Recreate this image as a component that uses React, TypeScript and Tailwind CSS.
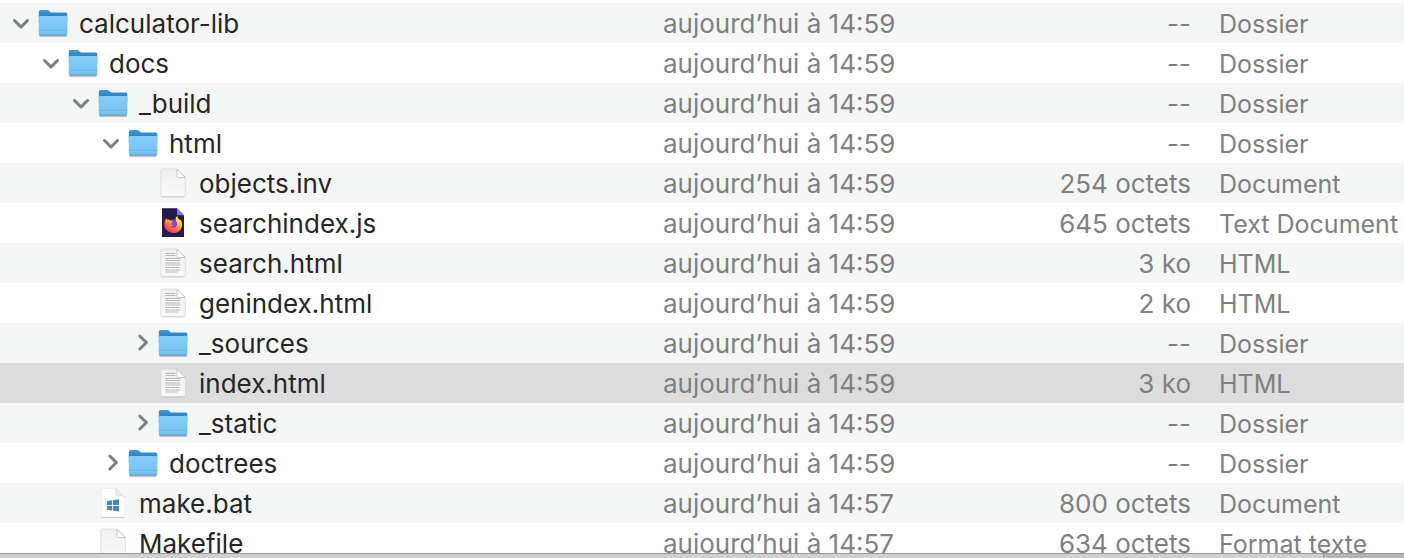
import { useState } from "react";

type IconKind = "folder" | "blank" | "firefox" | "text" | "windows";

interface Entry {
  name: string;
  indent: string;
  level: number;
  icon: IconKind;
  date: string;
  size: string;
  kind: string;
  open?: boolean;
}

const PAD = ["pl-[10px]", "pl-[40px]", "pl-[70px]", "pl-[100px]", "pl-[130px]"];
const T59 = "aujourd’hui à 14:59";
const T57 = "aujourd’hui à 14:57";

function folder(name: string, level: number, open: boolean): Entry {
  return { name, level, indent: PAD[level], icon: "folder", date: T59, size: "--", kind: "Dossier", open };
}

function file(name: string, level: number, icon: IconKind, size: string, kind: string, date = T59): Entry {
  return { name, level, indent: PAD[level], icon, date, size, kind };
}

const ENTRIES: Entry[] = [
  folder("calculator-lib", 0, true),
  folder("docs", 1, true),
  folder("_build", 2, true),
  folder("html", 3, true),
  file("objects.inv", 4, "blank", "254 octets", "Document"),
  file("searchindex.js", 4, "firefox", "645 octets", "Text Document"),
  file("search.html", 4, "text", "3 ko", "HTML"),
  file("genindex.html", 4, "text", "2 ko", "HTML"),
  folder("_sources", 4, false),
  file("index.html", 4, "text", "3 ko", "HTML"),
  folder("_static", 4, false),
  folder("doctrees", 3, false),
  file("make.bat", 2, "windows", "800 octets", "Document", T57),
  file("Makefile", 2, "blank", "634 octets", "Format texte", T57),
];

function Defs() {
  return (
    <svg className="absolute size-0" aria-hidden="true">
      <defs>
        <linearGradient id="folderFront" x1="0" y1="0" x2="0" y2="1">
          <stop offset="0" stopColor="#86cdf8" />
          <stop offset="1" stopColor="#70c0f0" />
        </linearGradient>
        <linearGradient id="folderBack" x1="0" y1="0" x2="0" y2="1">
          <stop offset="0" stopColor="#4997cf" />
          <stop offset="0.5" stopColor="#2f7fbd" />
        </linearGradient>
        <linearGradient id="paper" x1="0" y1="0" x2="0" y2="1">
          <stop offset="0" stopColor="#efefef" />
          <stop offset="1" stopColor="#f9f9f9" />
        </linearGradient>
        <linearGradient id="flame" x1="0.85" y1="0.05" x2="0.2" y2="0.95">
          <stop offset="0" stopColor="#fff04a" />
          <stop offset="0.4" stopColor="#ffb02c" />
          <stop offset="0.75" stopColor="#ff5a45" />
          <stop offset="1" stopColor="#ee2c84" />
        </linearGradient>
      </defs>
    </svg>
  );
}

function FolderIcon() {
  return (
    <svg viewBox="0 0 30 30" className="size-[30px]" aria-hidden="true">
      <path d="M1.500 28h27" stroke="#000" strokeOpacity=".3" strokeWidth="1.600" />
      <path d="M.8 4.200C.8 2.800 1.500 2 2.800 2h6.200c1 0 1.500.3 2.200 1l.8.8c.4.4.9.6 1.600.6h14c1.100 0 1.700.7 1.700 1.800V15H.8z" fill="url(#folderBack)" />
      <path d="M.8 10c0-1.200.6-1.800 1.700-1.800h25.100c1.100 0 1.700.6 1.700 1.800v15.800c0 1.100-.6 1.700-1.700 1.700H2.500c-1.100 0-1.700-.6-1.700-1.700z" fill="url(#folderFront)" />
      <path d="M1.500 8.600h27.500" stroke="#9bd6fa" strokeWidth=".6" />
      <path d="M.8 22.800h28.500" stroke="#5babdc" strokeWidth=".8" />
      <path d="M.8 23.700h28.500" stroke="#92d2f8" strokeWidth=".6" />
      <path d="M1.500 27h27.200" stroke="#4a9bd2" strokeWidth=".9" />
    </svg>
  );
}

function TextLines() {
  const lines = [
    ["M7.500 5.500h10", "3 .3 2 .2"],
    ["M7.500 7.500h10", "2 .2 3 .3"],
    ["M7.500 10.500h14.500", "2.500 .3 1.500 .2"],
    ["M7.500 12.500h15", "1.500 .2 3 .3"],
    ["M7.500 15h14.500", "3 .3 2 .3"],
    ["M7.500 17h15", "2 .3 1.500 .2"],
    ["M7.500 19.500h14", "1.500 .3 3 .2"],
    ["M7.500 22h15", "2.500 .2 2 .3"],
    ["M7.500 24h12", "2 .2 1.500 .3"],
  ];
  return (
    <g stroke="#b4b4b4" strokeWidth="1.200">
      {lines.map(([d, dash]) => (
        <path key={d} d={d} strokeDasharray={dash} />
      ))}
    </g>
  );
}

function PaperIcon({ lined }: { lined: boolean }) {
  return (
    <svg viewBox="0 0 30 30" className="size-[30px]" aria-hidden="true">
      <path d="M3.500 28.700h23" stroke="#000" strokeOpacity=".24" strokeWidth="1.200" />
      <path d="M4.500 1H19l8.300 8.500v17c0 1.300-.7 2-2 2H4.800c-1.300 0-2-.7-2-2v-24C2.800 1.500 3.500 1 4.500 1z" fill="url(#paper)" stroke="#d4d4d4" strokeWidth=".7" />
      {lined && <TextLines />}
      <path d="M19 1.200V8c0 1 .5 1.500 1.500 1.500h6.800z" fill="#fff" stroke="#b8b8b8" strokeWidth=".8" />
    </svg>
  );
}

function FirefoxIcon() {
  return (
    <svg viewBox="0 0 30 30" className="size-[30px]" aria-hidden="true">
      <path d="M4 .2h15l7 7V29H4z" fill="#241a4d" />
      <path d="M19 .2v6c0 .7.300 1 1 1h6z" fill="#8a74d4" />
      <path d="M6.900 12.600c.2-1 .8-2 1.500-2.700.1.900.4 1.400.9 1.800.8-.2 1.500-.1 2.100.2l8-2.900c.3 1.300 1.400 2 2.300 3.200.1-.5 0-.9-.1-1.300 1.900 1.400 2.800 3.800 2.500 6.500-.5 4.300-3.800 7.600-8.500 7.600-5.200 0-9.200-3.500-9.200-8.200 0-1.500 0-3 .5-4.200z" fill="url(#flame)" />
      <path d="M11.400 11.900c1.300-1.800 3-2.600 4.800-2.900l3.200-.2c-.7 1.200-.7 2.400.2 4z" fill="#241a4d" />
      <path d="M19.400 8c-1.500 1-2.200 2.600-1.600 4.200l1.700 3 2.500-2.500c-1-1.500-2.600-2.300-2.600-4.700z" fill="#ffe24a" />
      <path d="M12.300 12.500c1.500-1.400 4.300-1.200 5.800.4 1.700 1.900 1.500 5-.5 6.300-1.700 1.100-4.100.6-5-.9 1.600.3 2.400-.5 2.800-1.200-1.300.2-2.300-.4-2.100-1.300 0-.7.8-1.100 1.600-1.100-.2-1.200-1.500-1.700-2.600-2.200z" fill="#8045e2" />
    </svg>
  );
}

function WindowsIcon() {
  return (
    <svg viewBox="0 0 30 30" className="size-[30px]" aria-hidden="true">
      <path d="M3.500 29.300h23" stroke="#000" strokeOpacity=".3" strokeWidth=".9" />
      <path d="M3.500 .5H17.500l8.800 8.500v20H3.500z" fill="#fff" stroke="#e6e6e6" strokeWidth=".5" />
      <path d="M17.500 .5c1 2.500.8 5 .2 6.800 2.800-.5 6.300.1 8.600 1.700z" fill="#ededed" stroke="#c9c9c9" strokeWidth=".5" />
      <path d="M9 13l5-.7V17H9zM14.800 12.200l6.200-.9V17h-6.200zM9 17.700h5v4.700l-5-.7zM14.800 17.700H21v5.700l-6.200-.9z" fill="#4f87ab" />
    </svg>
  );
}

function EntryIcon({ kind }: { kind: IconKind }) {
  if (kind === "folder") return <FolderIcon />;
  if (kind === "firefox") return <FirefoxIcon />;
  if (kind === "windows") return <WindowsIcon />;
  return <PaperIcon lined={kind === "text"} />;
}

function Chevron({ open }: { open: boolean }) {
  return (
    <svg viewBox="0 0 22 22" className="size-[22px]" fill="none" stroke="#7c7d7d" strokeWidth="3" strokeLinecap="round" strokeLinejoin="round" aria-hidden="true">
      <path d={open ? "M4.500 8.500l6.500 6.500 6.500-6.500" : "M9.800 4l6.700 6.500-6.700 6.500"} />
    </svg>
  );
}

export default function App() {
  const [closed, setClosed] = useState<string[]>(
    ENTRIES.filter((e) => e.open === false).map((e) => e.name),
  );
  const [selected, setSelected] = useState("index.html");

  const visible: Entry[] = [];
  let hiddenBelow = Infinity;
  for (const entry of ENTRIES) {
    if (entry.level > hiddenBelow) continue;
    hiddenBelow = closed.includes(entry.name) ? entry.level : Infinity;
    visible.push(entry);
  }

  const toggle = (name: string) =>
    setClosed((list) => (list.includes(name) ? list.filter((n) => n !== name) : [...list, name]));

  return (
    <div className="flex h-screen flex-col bg-white font-['Inter',sans-serif] text-[26px] leading-[38px]">
      <Defs />
      <main className="min-h-0 flex-1 overflow-hidden pt-[3px]">
        <table className="w-full table-fixed border-collapse whitespace-nowrap">
          <colgroup>
            <col />
            <col className="w-[345px]" />
            <col className="w-[183px]" />
            <col className="w-[213px]" />
          </colgroup>
          <tbody className="text-[#7f8080]">
            {visible.map((entry, i) => {
              const isOpen = !closed.includes(entry.name);
              const isSelected = entry.name === selected;
              const background = isSelected ? "bg-[#dcdcdc]" : i % 2 === 0 ? "bg-[#f4f6f5]" : "bg-white";
              return (
                <tr key={entry.name} className={background} aria-selected={isSelected} onClick={() => setSelected(entry.name)}>
                  <th scope="row" className="p-0 text-left font-normal text-[#262626]">
                    <div className={`flex h-10 items-center ${entry.indent}`}>
                      {entry.icon === "folder" ? (
                        <button
                          type="button"
                          aria-expanded={isOpen}
                          aria-label={entry.name}
                          className="w-[22px]"
                          onClick={(event) => {
                            event.stopPropagation();
                            toggle(entry.name);
                          }}
                        >
                          <Chevron open={isOpen} />
                        </button>
                      ) : (
                        <span className="w-[22px]" />
                      )}
                      <span className="mr-[11px] ml-[6px]">
                        <EntryIcon kind={entry.icon} />
                      </span>
                      <span className="pt-0.5">{entry.name}</span>
                    </div>
                  </th>
                  <td className="p-0 pt-0.5">{entry.date}</td>
                  <td className="p-0 pt-0.5 text-right">{entry.size}</td>
                  <td className="p-0 pt-0.5 pl-7 text-[25px]">{entry.kind}</td>
                </tr>
              );
            })}
          </tbody>
        </table>
      </main>
      <div className="flex h-[5px] shrink-0 border-t border-[#999999]">
        <div className="flex-1 bg-[#d0d0d0]" />
        <div className="w-[81px] border-l border-[#8f9194] bg-[#b4b6ba]" />
      </div>
    </div>
  );
}
